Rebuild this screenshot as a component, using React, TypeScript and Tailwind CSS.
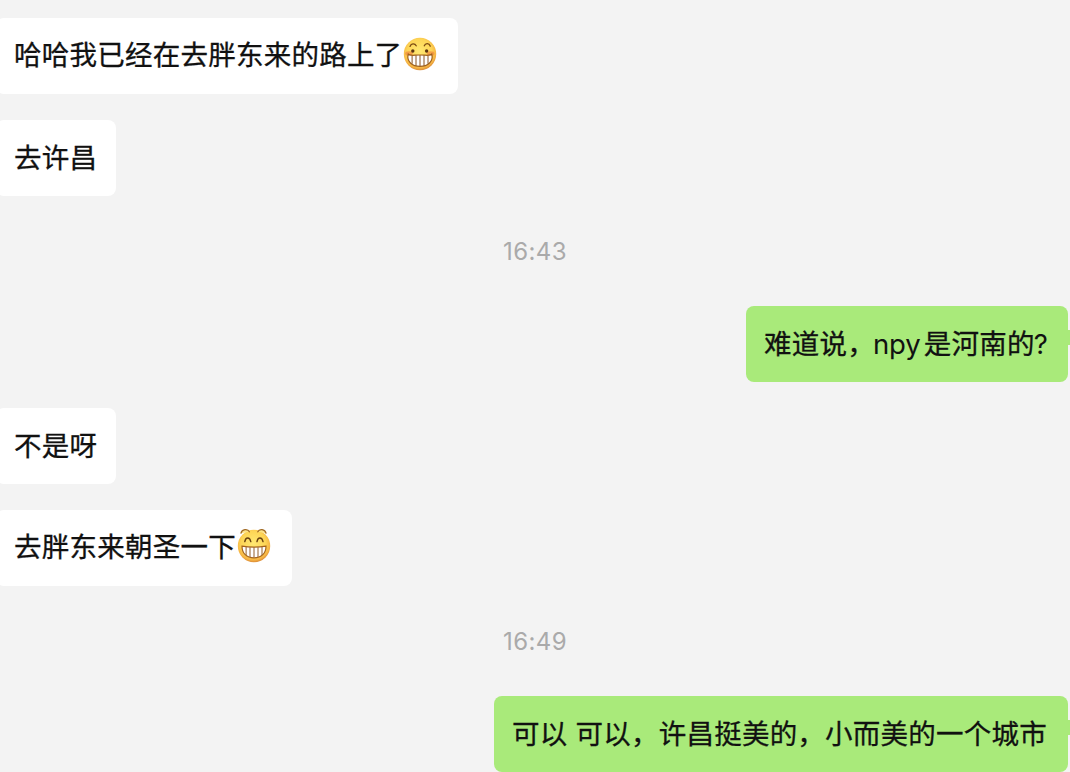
import React from "react";

function FaceBase({ id }: { id: string }) {
  return (
    <>
      <defs>
        <radialGradient id={id} cx="48%" cy="42%" r="58%">
          <stop offset="0" stopColor="#ffe872" />
          <stop offset="0.65" stopColor="#fdd556" />
          <stop offset="0.88" stopColor="#f6b544" />
          <stop offset="1" stopColor="#dc8c36" />
        </radialGradient>
      </defs>
      <circle cx="17" cy="17" r="16.2" fill={`url(#${id})`} />
    </>
  );
}

function GrinEmoji() {
  return (
    <svg viewBox="0 0 34 34" className="size-[34px] shrink-0">
      <FaceBase id="grin-face" />
      <ellipse cx="6" cy="16.6" rx="3.8" ry="2.4" fill="#ee7b3c" opacity="0.6" />
      <ellipse cx="27.6" cy="16.6" rx="3.8" ry="2.4" fill="#ee7b3c" opacity="0.6" />
      <path d="M7 9.4C8.200 6.200 11.800 6 13.200 8.800M21.300 8.800C22.400 5.900 26.100 6 27.300 9.200" fill="none" stroke="#7c4a12" strokeWidth="1.300" strokeLinecap="round" />
      <circle cx="9.800" cy="14" r="1.700" fill="#5d3510" />
      <circle cx="23.600" cy="14" r="1.700" fill="#5d3510" />
      <path d="M5.200 17.200C6.500 19.200 11 18 17 18S27.500 19.200 28.800 17.200C30.600 24.500 25 29.400 17 29.400S3.400 24.500 5.200 17.200Z" fill="#fff" stroke="#a0601c" strokeWidth="1.200" />
      <path d="M9.100 18.800v8M13 18.300v10.500M17 18v11M21 18.300v10.500M25 18.800v8" stroke="#8a5524" strokeWidth="1" />
    </svg>
  );
}

function BeamEmoji() {
  return (
    <svg viewBox="0 0 34 34" className="size-[34px] shrink-0 overflow-visible">
      <FaceBase id="beam-face" />
      <path d="M4 4.200C4.800.1 10.800-.6 12.400 2.800M20.800 2.800C22.400-.6 28 .1 29 4.200" fill="#fde487" stroke="#a26b25" strokeWidth="1.300" strokeLinecap="round" />
      <path d="M7.800 12.600C8.600 7.700 12.800 7.700 13.800 12.600M20 12.600C20.800 7.700 25 7.700 26 12.600" fill="none" stroke="#68400f" strokeWidth="1.400" strokeLinecap="round" />
      <path d="M5 17.200C12 18.200 22 18.200 29 17.200C29 24.200 24.500 28.800 17 28.800S5 24.200 5 17.200Z" fill="#fff" stroke="#a5641d" strokeWidth="1.200" />
      <path d="M9.100 18v8M13 18.200v9.800M17 18.200v10.300M21 18.200v9.800M25 18v8" stroke="#94602d" strokeWidth="1" />
    </svg>
  );
}

const text = "text-[27.5px] leading-[38px] tracking-[0.24px] whitespace-pre text-[#111] [-webkit-text-stroke:0.3px_#111]";
const incoming = `-ml-1 flex h-[76px] items-center rounded-lg bg-white pl-[18px] ${text}`;
const outgoing = `relative flex h-[76px] items-center self-end mr-[2px] rounded-lg bg-[#a9ea7a] pl-[18px] ${text}`;

function Time({ children }: { children: React.ReactNode }) {
  return <div className="mt-[38px] mb-[36px] h-[36px] text-center text-[24px] leading-[36px] tracking-[0.4px] text-[#aaa]">{children}</div>;
}

function Tail() {
  return <i className="absolute top-[24px] -right-[2px] h-[15px] w-[2px] bg-[#a9ea7a]" />;
}

export default function App() {
  return (
    <main className="flex h-[772px] w-[1070px] flex-col items-stretch overflow-hidden bg-[#f3f3f3] pt-[18px] font-['Inter','Noto_Sans_CJK_SC',sans-serif]">
      <div className={`w-[462px] shrink-0 ${incoming}`}>
        <span className="-mt-[2px] mr-[1px]">哈哈我已经在去胖东来的路上了</span>
        <div className="-mt-[4px]"><GrinEmoji /></div>
      </div>
      <div className={`mt-[26px] w-[120px] shrink-0 ${incoming}`}><span>去许昌</span></div>
      <Time>16:43</Time>
      <div className={`w-[322px] shrink-0 ${outgoing}`}>
        <span>难道说，<span className="-ml-[2px] mr-[3px] tracking-[-0.1px] [-webkit-text-stroke:0]">npy</span>是河南的<span className="-ml-[1px] [-webkit-text-stroke:0]">?</span></span>
        <Tail />
      </div>
      <div className={`mt-[26px] w-[120px] shrink-0 ${incoming}`}><span>不是呀</span></div>
      <div className={`mt-[26px] w-[296px] shrink-0 ${incoming}`}>
        <span className="-mt-[2px] mr-[1px]">去胖东来朝圣一下</span>
        <div className="-mt-[4px]"><BeamEmoji /></div>
      </div>
      <Time>16:49</Time>
      <div className={`w-[574px] shrink-0 ${outgoing}`}>
        <span>可以 可以，许昌挺美的，小而美的一个城市</span>
        <Tail />
      </div>
    </main>
  );
}
